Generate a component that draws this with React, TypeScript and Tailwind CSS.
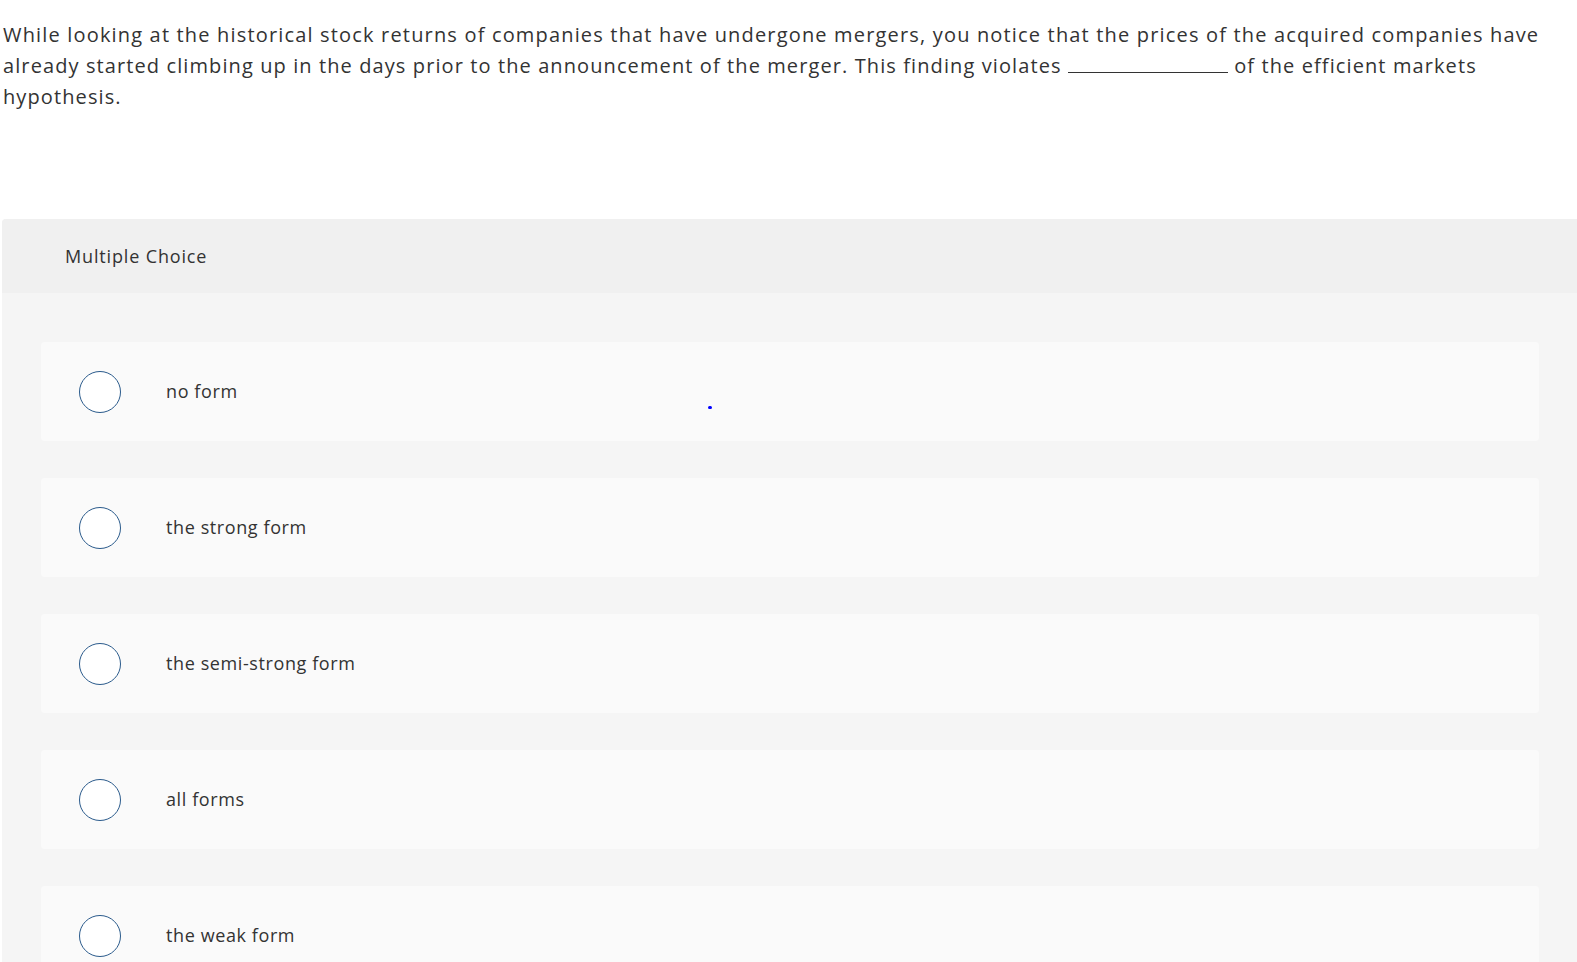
const options = ["no form", "the strong form", "the semi-strong form", "all forms", "the weak form"];

export default function App() {
  return (
    <div className="relative min-h-screen bg-white font-['Open_Sans','Lato',sans-serif] text-[#333]">
      <div className="whitespace-nowrap px-[3px] pt-[19px] text-[20px] leading-[31px]">
        <span className="tracking-[1.17px]">
          While looking at the historical stock returns of companies that have undergone mergers, you notice that the prices of the acquired companies have
        </span>
        <br />
        <span className="tracking-[1.1px]">
          already started climbing up in the days prior to the announcement of the merger. This finding violates{" "}
          <span className="inline-block w-[160px] border-b border-[#333] align-baseline"></span> of the efficient markets
          <br />
          hypothesis.
        </span>
      </div>

      <div className="ml-[2px] mt-[107px] rounded-tl-[4px] bg-[#f5f5f5]">
        <div className="flex h-[74px] items-center rounded-tl-[4px] bg-[#f0f0f0] pl-[63px] text-[18px] tracking-[0.85px]">
          Multiple Choice
        </div>
        <div className="flex flex-col gap-[37px] pl-[39px] pr-[38px] pt-[49px] pb-[20px]">
          {options.map((o) => (
            <label key={o} className="flex h-[99px] items-center rounded-[4px] bg-[#fafafa] pl-[38px]">
              <span className="h-[42px] w-[42px] shrink-0 rounded-full border border-[#2b5b8c] bg-white"></span>
              <span className="ml-[45px] text-[18px] tracking-[0.6px]">{o}</span>
            </label>
          ))}
        </div>
      </div>

      <div className="absolute left-[708px] top-[406px] h-[3px] w-[4px] rounded-full bg-[#0000ff]"></div>
    </div>
  );
}
